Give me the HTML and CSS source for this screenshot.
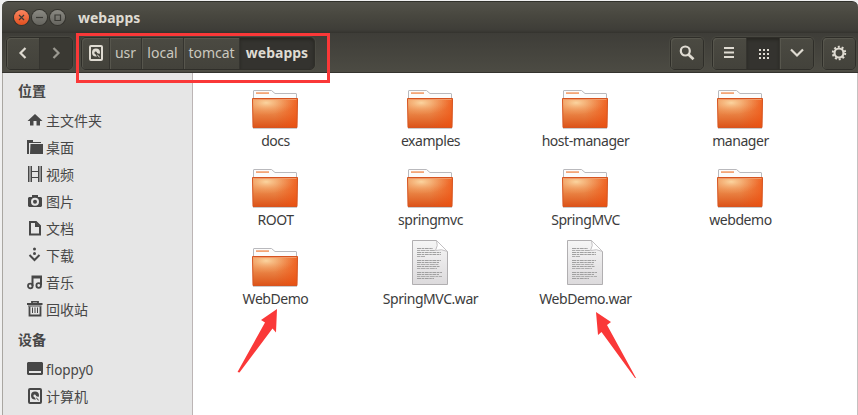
FILE: index.html
```html
<!DOCTYPE html>
<html lang="zh-CN">
<head>
<meta charset="utf-8">
<title>webapps</title>
<link rel="stylesheet" href="styles.css">
</head>
<body>
<svg class="defs" width="0" height="0">
  <defs>
    <linearGradient id="face" x1="0" y1="0" x2="0" y2="1">
      <stop offset="0" stop-color="#ef9a5e"/><stop offset="0.5" stop-color="#ea8546"/><stop offset="1" stop-color="#dc5318"/>
    </linearGradient>
    <radialGradient id="glow" cx="0.3" cy="0.2" r="0.65">
      <stop offset="0" stop-color="#fbd5a0"/><stop offset="1" stop-color="#f29a5c" stop-opacity="0"/>
    </radialGradient>
    <linearGradient id="shade" x1="0" y1="0" x2="1" y2="0">
      <stop offset="0.5" stop-color="#f0500f" stop-opacity="0"/><stop offset="1" stop-color="#f0500f" stop-opacity=".7"/>
    </linearGradient>
    <linearGradient id="paper" x1="0" y1="0" x2="0" y2="1">
      <stop offset="0" stop-color="#f6f6f6"/><stop offset="1" stop-color="#dcdadc"/>
    </linearGradient>
    <symbol id="folder" viewBox="0 0 48 48">
      <path d="M2 41h44v1H2z" fill="#ccc"/>
      <path d="M2.500 14V4q0-.5.5-.5h17.500l3.500 3h21q.5 0 .5.500v7z" fill="#fcfcfc" stroke="#b9b9bd"/>
      <path d="M5 5.200h13v1.800H5z" fill="#f3a577"/>
      <path d="M1.500 11.500h45l-.5 29h-44z" fill="url(#face)"/>
      <path d="M1.500 11.500h45l-.5 29h-44z" fill="url(#shade)"/>
      <path d="M2 12h44v12Q24 25 2 31z" fill="url(#glow)"/>
      <path d="M1.500 11.500h45l-.5 29h-44z" fill="none" stroke="#d65420"/>
      <path d="M2.500 12.500h43" stroke="#f19a68"/>
    </symbol>
    <symbol id="file" viewBox="0 0 48 48">
      <path d="M6.500 1.500h24l11 11v33h-35z" fill="url(#paper)" stroke="#b1afb1"/>
      <path d="M30.500 1.500q2 5-1 10 6-2 12 1z" fill="#fff" stroke="#c2c0c2"/>
      <path d="M11 9.500h16M11 13.500h24M11 15.500h24M11 21.500h24M11 23.500h22M11 27.500h23M11 33.500h25M11 35.500h22M11 39.500h17" stroke="#a0a0a0" stroke-dasharray="4 .6 2.500 .6"/>
      <path d="M11 11.500h18M11 17.500h8M11 25.500h22M11 29.500h20M11 37.500h25" stroke="#acacac" stroke-dasharray="3 .6 5 .6"/>
    </symbol>
    <symbol id="disk" viewBox="0 0 16 16">
      <rect x="2" y="1" width="12" height="14" rx="1" fill="none" stroke="currentColor" stroke-width="2"/>
      <path d="M8 3.500a4 4 0 0 1 4 4l-.5 1.500L9 8a1.300 1.300 0 1 0-1.500 1.200L9 11.500H8a4 4 0 0 1 0-8zM9.500 9.500l2 2v1.500l-2.500-3z" fill="currentColor"/>
    </symbol>
  </defs>
</svg>
<div class="window">
  <header class="titlebar">
    <span class="ctl close"><svg viewBox="0 0 15 15"><path d="M5 5l5 5M10 5l-5 5"/></svg></span>
    <span class="ctl"><svg viewBox="0 0 15 15"><path d="M4 7.500h7"/></svg></span>
    <span class="ctl"><svg viewBox="0 0 15 15"><path d="M5 5h5.500v5.500H5z"/></svg></span>
    <h1>webapps</h1>
  </header>
  <nav class="toolbar">
    <div class="group nav">
      <button><svg viewBox="0 0 16 16"><path d="M10.500 3L5.500 8l5 5" class="line"/></svg></button>
      <button class="off"><svg viewBox="0 0 16 16"><path d="M5.500 3l5 5-5 5" class="line"/></svg></button>
    </div>
    <div class="group path">
      <button class="p-disk"><svg viewBox="0 0 16 16"><use href="#disk"/></svg></button>
      <button class="p-usr"><span>usr</span></button>
      <button class="p-local"><span>local</span></button>
      <button class="p-tomcat"><span>tomcat</span></button>
      <button class="p-web on"><span>webapps</span></button>
      <i class="highlight"></i>
    </div>
    <div class="group search">
      <button><svg viewBox="0 0 16 16"><circle cx="6.300" cy="6" r="4.500" class="line"/><path d="M9.500 9.500l5 4.800" class="line thick"/></svg></button>
    </div>
    <div class="group views">
      <button><svg viewBox="0 0 16 16"><path d="M3 3h10M3 7.500h10M3 12h10" class="line two"/></svg></button>
      <button class="on"><svg viewBox="0 0 16 16"><path d="M3 5h10M3 9h10M3 13h10" class="line dots"/></svg></button>
      <button><svg viewBox="0 0 16 16"><path d="M2 4.500L8 10.500l6-6" class="line"/></svg></button>
    </div>
    <div class="group gear">
      <button><svg viewBox="0 0 16 16"><circle cx="8" cy="8" r="4.500" class="line"/><circle cx="8" cy="8" r="6.200" class="teeth"/></svg></button>
    </div>
  </nav>
  <div class="body">
    <aside>
      <h2>位置</h2>
      <ul>
        <li><svg viewBox="0 0 16 16"><path d="M8 2L.5 9H3v4.500h3.500V9h3v4.500H13V9h2.500z"/></svg><span>主文件夹</span></li>
        <li><svg viewBox="0 0 16 16"><path d="M0 1h6v2h8v2H3.500v-1H2v11H0zM3.500 5H16v10H3z"/><path d="M2.500 14V4.500H14" fill="none" stroke="#e6e6e6"/></svg><span>桌面</span></li>
        <li><svg viewBox="0 0 16 16"><path d="M4 5.500h8M4 11.500h8M1.500 0v16M4.500 0v16M11.500 0v16M14.500 0v16" class="film"/><path d="M3 .5v15M13 .5v15" class="film perf"/></svg><span>视频</span></li>
        <li><svg viewBox="0 0 16 16"><path fill-rule="evenodd" d="M2 4h3V2h6v2h3l1 1v8l-1 1H2l-1-1V5zM8 4.800a4 4 0 1 0 0 8 4 4 0 0 0 0-8z"/><circle cx="8" cy="8.800" r="2"/></svg><span>图片</span></li>
        <li><svg viewBox="0 0 16 16"><path d="M3 2h6l4 4v8.500H3z" fill="none" stroke="#474747" stroke-width="2"/><path d="M8 2v5h5z"/></svg><span>文档</span></li>
        <li><svg viewBox="0 0 16 16"><path d="M2.500 8l5 5 5-5" fill="none" stroke="#474747" stroke-width="2"/><circle cx="7.500" cy="2" r="1.500"/><circle cx="7.500" cy="6.500" r="1.500"/></svg><span>下载</span></li>
        <li><svg viewBox="0 0 16 16"><path d="M5.500 12V2.500H14V11M5.500 3.500H14" fill="none" stroke="#474747" stroke-width="2"/><circle cx="3.300" cy="12" r="2.300" class="ring"/><circle cx="11.700" cy="11.500" r="2.300" class="ring"/></svg><span>音乐</span></li>
        <li><svg viewBox="0 0 16 16"><path d="M0 3h15.500M5 2.500v-2h6v2M2.500 5.500v9h11v-9" class="ring"/><path d="M1 5h13.500M5.500 6.500V12M8 6.500V12M10.500 6.500V12" class="film"/></svg><span>回收站</span></li>
      </ul>
      <h2 class="dev">设备</h2>
      <ul>
        <li><svg viewBox="0 0 16 16"><path fill-rule="evenodd" d="M1 1h14l1 1v11l-1 1H1l-1-1V2zM2 10v2h12v-2z"/></svg><span class="latin">floppy0</span></li>
        <li><svg viewBox="0 0 16 16"><use href="#disk"/></svg><span>计算机</span></li>
      </ul>
    </aside>
    <main>
      <figure><svg><use href="#folder"/></svg><figcaption>docs</figcaption></figure>
      <figure><svg><use href="#folder"/></svg><figcaption>examples</figcaption></figure>
      <figure><svg><use href="#folder"/></svg><figcaption>host-manager</figcaption></figure>
      <figure><svg><use href="#folder"/></svg><figcaption>manager</figcaption></figure>
      <figure><svg><use href="#folder"/></svg><figcaption>ROOT</figcaption></figure>
      <figure><svg><use href="#folder"/></svg><figcaption>springmvc</figcaption></figure>
      <figure><svg><use href="#folder"/></svg><figcaption>SpringMVC</figcaption></figure>
      <figure><svg><use href="#folder"/></svg><figcaption>webdemo</figcaption></figure>
      <figure><svg><use href="#folder"/></svg><figcaption>WebDemo</figcaption></figure>
      <figure class="doc"><svg><use href="#file"/></svg><figcaption>SpringMVC.war</figcaption></figure>
      <figure class="doc"><svg><use href="#file"/></svg><figcaption>WebDemo.war</figcaption></figure>
    </main>
  </div>
</div>
<svg class="arrows" viewBox="0 0 858 415"><path d="M277 309l-16 11 4 2.500L237.500 372l2 .5 33-44 3.500 4zM596 312l2 23 3.500-3L635 378l1 0L607 325l4-3z"/></svg>
</body>
</html>
```
FILE: styles.css
```css
* { box-sizing: border-box; }
body {
  margin: 0;
  width: 858px;
  height: 415px;
  overflow: hidden;
  background: #f0f0f0;
  font: 14px/20px "Noto Sans", "Noto Sans CJK SC", sans-serif;
  color: #3c3c3c;
}
svg { display: block; flex: none; }
.defs { position: absolute; }
.window {
  margin: 1px 0 0 2px;
  height: 414px;
  width: 856px;
  display: flex;
  flex-direction: column;
}
.titlebar {
  height: 32px;
  padding: 0 12px;
  display: flex;
  align-items: center;
  gap: 3px;
  border-top: 1px solid #30302a;
  border-radius: 6px 6px 0 0;
  background: linear-gradient(#53524a, #494840 40%, #3e3d38 90%, #34332e);
}
.ctl {
  width: 15px;
  height: 15px;
  border-radius: 50%;
  background: linear-gradient(#8b8a83, #65645e);
  box-shadow: 0 0 0 1px #34332e;
}
.ctl svg { width: 15px; height: 15px; fill: none; stroke: #3b3a35; stroke-width: 1.2; }
.close { background: linear-gradient(#fa8560, #e2501f); }
h1 { margin: 1px 0 0 10px; font-size: 14px; line-height: 20px; color: #dfdbd2; }
.toolbar {
  height: 40px;
  padding: 4px 2px 3px 4px;
  display: flex;
  border-bottom: 1px solid #34332e;
  background: linear-gradient(#3e3d38, #4c4b43);
}
.group {
  position: relative;
  height: 33px;
  display: flex;
  border: 1px solid #2f2e29;
  border-radius: 5px;
  box-shadow: 0 0 0 1px #55544c66;
}
button {
  flex: 1;
  margin: 0;
  padding: 0 0 1px;
  display: flex;
  align-items: center;
  justify-content: center;
  border: 0;
  border-left: 1px solid #35342f;
  background: linear-gradient(#4b4a42, #43423b);
  box-shadow: inset 1px 1px #57564d;
  font: 14px/20px "Noto Sans", sans-serif;
  color: #dfdbd2;
}
button:first-child { border-left: 0; border-radius: 4px 0 0 4px; }
button:nth-last-of-type(1) { border-radius: 0 4px 4px 0; }
button:only-child { border-radius: 4px; }
button svg { width: 16px; height: 16px; }
.on { background: #34332f; box-shadow: inset 0 2px 3px #282722; font-weight: 700; }
.off { background: #3a3933; box-shadow: none; color: #9a9890; }
.line { fill: none; stroke: currentColor; stroke-width: 2.2; }
.thick { stroke-width: 2.7; }
.two { stroke-width: 2; }
.dots { stroke-width: 2; stroke-dasharray: 2 2; }
.teeth { fill: none; stroke: currentColor; stroke-width: 2; stroke-dasharray: 2 1.895; }
.nav { width: 67px; }
.path { width: 234px; margin-left: 8px; }
.path button { flex: none; }
.path button:not(.on) span { color: #cbc8bf; }
.path .p-disk { width: 27px; }
.p-usr { width: 32px; }
.p-local { width: 42px; }
.path .p-tomcat { width: 56px; }
.path .p-web { width: 75px; }
.search { width: 34px; margin-left: auto; }
.views { width: 102px; margin-left: 8px; }
.views .on svg { margin-left: 2px; }
.gear { width: 34px; margin-left: 8px; }
.highlight {
  position: absolute;
  left: -6px;
  top: -5px;
  width: 254px;
  height: 50px;
  border: 3px solid #fa3838;
  z-index: 2;
}
.body { flex: 1; display: flex; min-height: 0; }
aside {
  width: 191px;
  flex: none;
  padding: 8px 0 0 15px;
  background: #e6e6e6;
  border-left: 1px solid #a9a6a1;
  border-right: 1px solid #bcb5b5;
}
h2 { margin: 0 0 6px; font-size: 14px; line-height: 20px; color: #474747; }
h2.dev { margin: 7px 0 6px; }
ul { margin: 0; padding: 0 0 0 9px; list-style: none; }
li { height: 27px; display: flex; align-items: center; gap: 3px; color: #474747; }
li svg { width: 16px; height: 16px; margin-top: -1px; fill: #474747; }
.latin { font-size: 13.5px; }
.film { stroke: #474747; stroke-width: 1; fill: none; }
.perf { stroke-width: 2; stroke-dasharray: 1 1; }
.ring { stroke: #474747; stroke-width: 1.8; fill: none; }
main {
  flex: 1;
  padding: 14px 0 0 5px;
  display: grid;
  grid-template-columns: repeat(4, 155px);
  grid-auto-rows: 79px;
  align-content: start;
  background: #fff;
  border-right: 1px solid #c5c0c0;
}
figure { margin: 0; display: flex; flex-direction: column; align-items: center; }
figure svg { width: 48px; height: 48px; margin: 0 1px -4px 0; }
.doc svg { margin: -6px 1px 2px 0; }
figcaption { font-size: 14px; letter-spacing: -.45px; white-space: nowrap; }
.arrows { position: absolute; left: 0; top: 0; width: 858px; height: 415px; fill: #fa3838; pointer-events: none; }
```
